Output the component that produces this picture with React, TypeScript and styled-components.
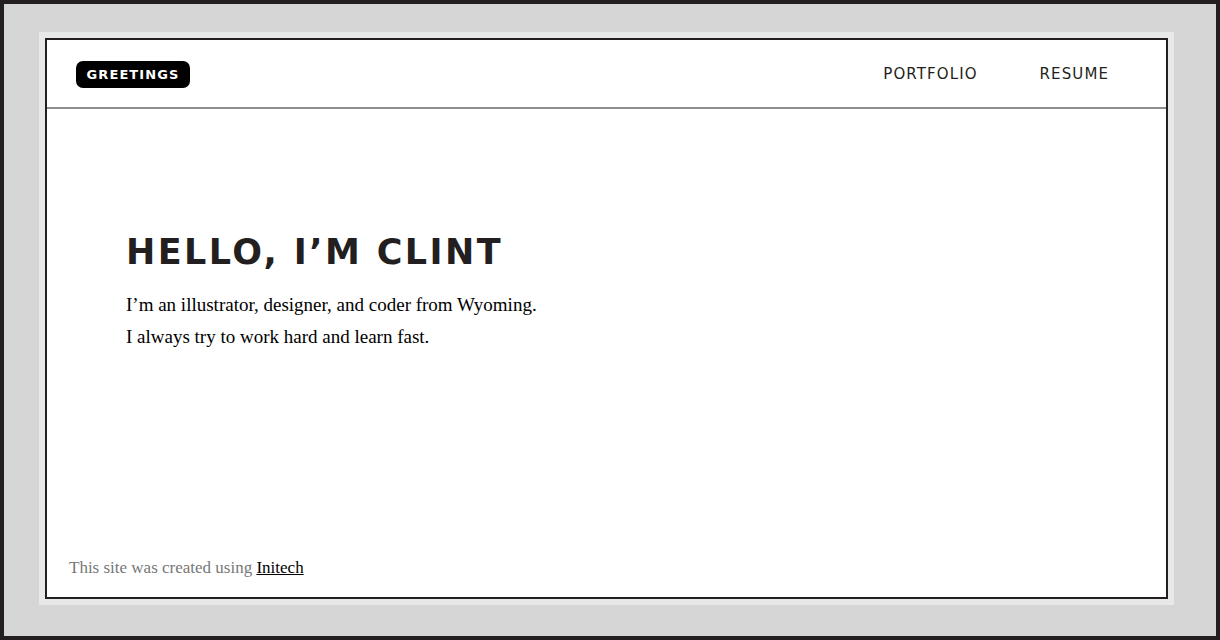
import React from "react";
import styled, { createGlobalStyle } from "styled-components";

const Global = createGlobalStyle`
  html, body { margin: 0; padding: 0; }
  body { background: #d6d6d6; }
  * { box-sizing: border-box; }
`;

const Page = styled.div`
  height: 640px;
  border: 4px solid #231f20;
  background: #d6d6d6;
  padding: 28px 42px 31px 35px;
  display: flex;
`;

const Frame = styled.div`
  flex: 1;
  background: #e8e8e8;
  padding: 6px 6px 6px 6px;
  display: flex;
`;

const Card = styled.div`
  flex: 1;
  background: #fff;
  border: 2px solid #231f20;
  display: flex;
  flex-direction: column;
`;

const Header = styled.header`
  height: 69px;
  border-bottom: 2px solid #8f8f8f;
  display: flex;
  align-items: center;
  justify-content: space-between;
  padding: 0 57px 0 29px;
`;

const Badge = styled.div`
  background: #000;
  color: #fff;
  border-radius: 7px;
  height: 27px;
  width: 114px;
  display: flex;
  align-items: center;
  justify-content: center;
  font-family: "DejaVu Sans", sans-serif;
  font-weight: bold;
  font-size: 13px;
  letter-spacing: 1.1px;
  margin-top: 1px;
`;

const Nav = styled.nav`
  display: flex;
  gap: 62px;
`;

const NavLink = styled.a`
  font-family: "DejaVu Sans", sans-serif;
  font-size: 15px;
  letter-spacing: 1.1px;
  color: #231f20;
  text-decoration: none;
`;

const Main = styled.main`
  flex: 1;
  padding: 123px 0 0 79px;
`;

const Title = styled.h1`
  margin: 0 0 17px 0;
  font-family: "DejaVu Sans", sans-serif;
  font-weight: bold;
  font-size: 35px;
  letter-spacing: 2.4px;
  color: #231f20;
  line-height: 40px;
`;

const Para = styled.p`
  margin: 0;
  font-family: "Liberation Serif", serif;
  font-size: 19px;
  line-height: 32px;
  color: #000;
`;

const Footer = styled.footer`
  padding: 0 0 19px 22px;
  font-family: "Liberation Serif", serif;
  font-size: 17px;
  color: #777;
`;

const FooterLink = styled.a`
  color: #000;
  text-decoration: underline;
`;

export default function App() {
  return (
    <>
      <Global />
      <Page>
        <Frame>
          <Card>
            <Header>
              <Badge>GREETINGS</Badge>
              <Nav>
                <NavLink href="#">PORTFOLIO</NavLink>
                <NavLink href="#">RESUME</NavLink>
              </Nav>
            </Header>
            <Main>
              <Title>HELLO, I’M CLINT</Title>
              <Para>
                I’m an illustrator, designer, and coder from Wyoming.
                <br />I always try to work hard and learn fast.
              </Para>
            </Main>
            <Footer>
              This site was created using <FooterLink href="#">Initech</FooterLink>
            </Footer>
          </Card>
        </Frame>
      </Page>
    </>
  );
}
